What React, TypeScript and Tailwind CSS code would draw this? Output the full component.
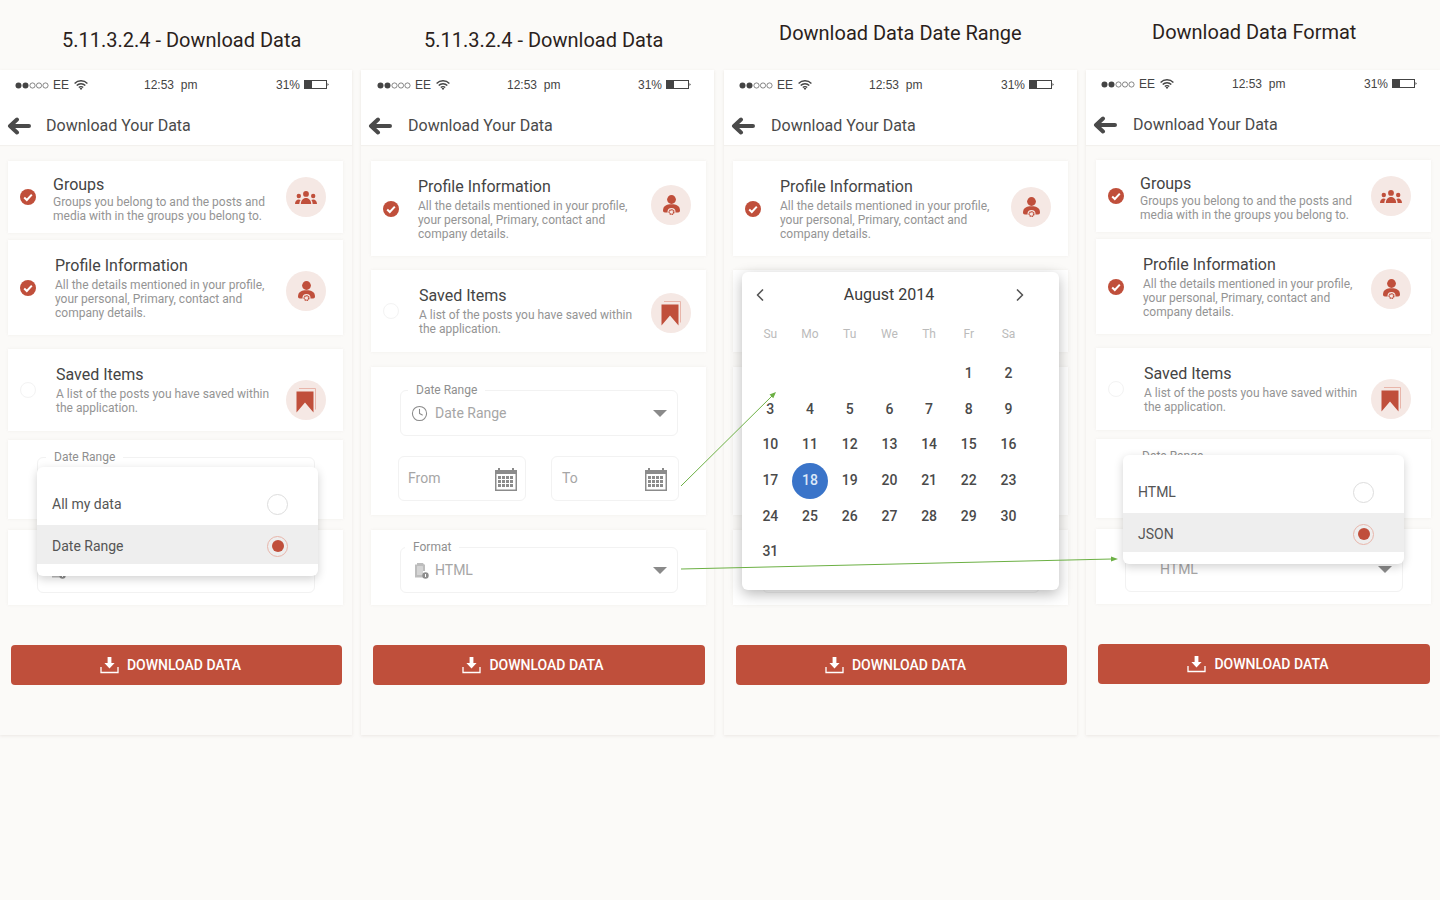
import React from "react";
import { ChevronLeft, ChevronRight, Clock } from "lucide-react";

const Check = () => (
  <svg width="16" height="16" viewBox="0 0 16 16" className="shrink-0">
    <circle cx="8" cy="8" r="8" fill="#c04f3b" />
    <path d="M4.200 8.500l2.600 2.500 5-5.400" fill="none" stroke="#fff" strokeWidth="2" />
  </svg>
);
const Empty = () => <div className="w-[16px] h-[16px] shrink-0 rounded-full border border-[#f3f3f3]" />;

const GroupsIcon = () => (
  <svg width="22" height="13" viewBox="0 0 22 13" fill="#c04f3b">
    <circle cx="11" cy="2.900" r="2.900" />
    <circle cx="3.800" cy="5" r="2.200" />
    <circle cx="18.200" cy="5" r="2.200" />
    <path d="M5.800 13c.2-3.600 2.200-6 5.200-6s5 2.400 5.200 6z" />
    <path d="M0 13c.1-2.800 1.600-4.400 3.800-4.400.8 0 1.300.2 1.800.5-.8 1.100-1.200 2.400-1.300 3.900z" />
    <path d="M22 13c-.1-2.800-1.600-4.400-3.800-4.400-.8 0-1.300.2-1.800.5.8 1.100 1.200 2.400 1.300 3.900z" />
  </svg>
);
const ProfileIcon = () => (
  <svg width="17" height="21" viewBox="0 0 17 21" fill="#c04f3b">
    <circle cx="8.500" cy="4.500" r="4.400" />
    <path d="M0 15.500C0 11 3.500 9.300 8.500 9.300s8.500 1.700 8.500 6.200c0 1.200-.8 2-1.800 2H1.800c-1 0-1.800-.8-1.800-2z" />
    <circle cx="8.500" cy="17" r="4" fill="#f5e8e4" />
    <circle cx="8.500" cy="17" r="2.300" fill="none" stroke="#c04f3b" strokeWidth="1.500" strokeDasharray="1.400 .5" />
  </svg>
);
const BookmarkIcon = () => (
  <svg width="20" height="25" viewBox="0 0 20 25" className="-ml-[1px]">
    <path d="M3 .5h16.500v21" fill="none" stroke="#e8b5aa" strokeWidth="1" />
    <path d="M.5 3.500h17v21l-8.500-10-8.500 10z" fill="#c04f3b" />
  </svg>
);
const Download = () => (
  <svg width="19" height="18" viewBox="0 0 19 18" fill="none">
    <path d="M1 11v5.500h17V11" stroke="#fff" strokeWidth="1.300" />
    <path d="M7.600 1h3.800v6h3.200l-5.100 5.600L4.400 7h3.200z" fill="#fff" />
  </svg>
);
const Back = () => (
  <svg width="24" height="18" viewBox="0 0 24 18" fill="none" stroke="#4a4a4a" strokeWidth="4" strokeLinecap="round" strokeLinejoin="round" className="shrink-0">
    <path d="M22 9H3.500M10 2.500L3 9l7 6.500" />
  </svg>
);
const Wifi = () => (
  <svg width="14" height="10" viewBox="0 0 14 10" fill="none" stroke="#444" strokeWidth="1.400">
    <path d="M.6 3.400a9 9 0 0 1 12.800 0M2.700 5.500a6 6 0 0 1 8.600 0M4.800 7.500a3.100 3.100 0 0 1 4.400 0" />
    <path d="M7 10L5.600 8.500a2 2 0 0 1 2.800 0z" fill="#444" stroke="none" />
  </svg>
);
const Battery = () => (
  <svg width="25" height="9" viewBox="0 0 25 9" className="-mt-[1px]">
    <rect x=".5" y=".5" width="22" height="8" fill="#fff" stroke="#444" />
    <rect x="1" y="1" width="7" height="7" fill="#444" />
    <path d="M23.500 3l1.300 1.500-1.300 1.500z" fill="#444" />
  </svg>
);
const Dots = () => (
  <svg width="34" height="7" viewBox="0 0 34 7">
    <circle cx="3.500" cy="3.500" r="3" fill="#444" />
    <circle cx="10.500" cy="3.500" r="3" fill="#444" />
    {[17.500, 24, 30.500].map((x) => (
      <circle key={x} cx={x} cy="3.500" r="2.600" fill="none" stroke="#555" strokeWidth=".7" />
    ))}
  </svg>
);
const Cal = () => (
  <svg width="22" height="24" viewBox="0 0 22 24">
    <path d="M0 3h3V1h2v2h12V1h2v2h3v21H0z" fill="#8b8b8b" />
    <rect x="1.500" y="7" width="19" height="15.500" fill="#fff" />
    {[9, 13, 17].map((y) =>
      [3, 7, 11, 15].map((x) => <rect key={`${x}${y}`} x={x} y={y} width="3" height="3" fill="#8b8b8b" />)
    )}
  </svg>
);
const FileIc = () => (
  <svg width="15" height="17" viewBox="0 0 15 17">
    <path d="M1 2.500h2V1h6l1 1.500h1V9H9v6.500H1z" fill="#bdbdbd" />
    <rect x="3" y="4" width="6" height="9" rx=".5" fill="#d5d5d5" />
    <circle cx="11.500" cy="13.500" r="3.200" fill="#8e8e8e" />
    <rect x="11" y="12" width="1" height="3" fill="#fff" />
  </svg>
);
const Caret = () => <div className="w-0 h-0 border-x-[7px] border-x-transparent border-t-[7px] border-t-[#8a8a8a]" />;

function Option({ lines, title, check, wrap, text, icon, circle, descCls = "mt-[2px]", bare = false }: { lines: string[]; title: string; check: boolean; wrap: string; text: string; icon: React.ReactNode; circle: string; descCls?: string; bare?: boolean }) {
  return (
    <div className={`flex items-center pl-3 bg-white shadow-[0_0_3px_rgba(120,100,90,0.08)] w-[335px] ${wrap}`}>
      {bare ? null : check ? <Check /> : <Empty />}
      {!bare && (
        <div className={text}>
          <div className="text-[16px] leading-[20px] text-[#444444]">{title}</div>
          <div className={`text-[12px] leading-[14px] text-[#949494] ${descCls}`}>
            {lines.map((l) => (
              <div key={l} className="whitespace-nowrap">{l}</div>
            ))}
          </div>
        </div>
      )}
      {!bare && <div className={`w-10 h-10 shrink-0 rounded-full bg-[#f5e8e4] flex items-center justify-center ml-auto ${circle}`}>{icon}</div>}
    </div>
  );
}

const GROUPS = ["Groups you belong to and the posts and", "media with in the groups you belong to."];
const PROFILE = ["All the details mentioned in your profile,", "your personal, Primary, contact and", "company details."];
const SAVED = ["A list of the posts you have saved within", "the application."];

function Field({ label, children, labelCls = "left-[7px]" }: { label?: string; children?: React.ReactNode; labelCls?: string }) {
  return (
    <div className="relative w-[278px] h-[46px] border border-[#f2f2f2] rounded-md flex items-center pl-[10px] pr-[10px]">
      {label && <span className={`absolute -top-[8px] bg-white px-2 text-[12px] leading-[14px] text-[#8f8f8f] ${labelCls}`}>{label}</span>}
      {children}
    </div>
  );
}

function DateCard({ mt, open, covered }: { mt: string; open: boolean; covered?: "all" | "value" }) {
  return (
    <div className={`bg-white shadow-[0_0_3px_rgba(120,100,90,0.08)] w-[335px] pl-[29px] ${mt} ${open ? "h-[148px] pt-[23px]" : "h-[79px] pt-[17px]"}`}>
      {covered === "all" ? (
        <Field />
      ) : covered === "value" ? (
        <Field label="Date Range" labelCls="left-[8px]" />
      ) : (
        <Field label="Date Range">
          <Clock size={17} strokeWidth={1.500} className="text-[#8a8a8a] shrink-0" />
          <span className="ml-[7px] text-[14px] text-[#a6a6a6]">Date Range</span>
          <span className="ml-auto"><Caret /></span>
        </Field>
      )}
      {open && (
        <div className="flex mt-[20px] -ml-[2px] gap-[25px]">
          <div className="w-[128px] h-[45px] border border-[#f2f2f2] rounded-md flex items-center justify-between pl-[9px] pr-[8px]">
            {covered !== "all" && <span className="text-[14px] text-[#a6a6a6]">From</span>}
            {covered !== "all" && <Cal />}
          </div>
          <div className="w-[128px] h-[45px] border border-[#f2f2f2] rounded-md flex items-center justify-between pl-[10px] pr-[11px]">
            {covered !== "all" && <span className="text-[14px] text-[#a6a6a6]">To</span>}
            {covered !== "all" && <Cal />}
          </div>
        </div>
      )}
    </div>
  );
}

function FormatCard({ mt, mode = "full" }: { mt: string; mode?: "full" | "none" | "iconOnly" | "valueOnly" }) {
  return (
    <div className={`h-[75px] pt-[17px] pl-[29px] w-[335px] bg-white shadow-[0_0_3px_rgba(120,100,90,0.08)] ${mt}`}>
      {mode === "none" ? (
        <Field />
      ) : (
        <Field label={mode === "full" ? "Format" : undefined} labelCls="left-[4px]">
          {mode !== "valueOnly" && <span className="ml-[3px] shrink-0"><FileIc /></span>}
          {mode === "valueOnly" && <span className="w-[15px] ml-[3px] shrink-0" />}
          {mode !== "iconOnly" && <span className="ml-[6px] text-[14px] text-[#a6a6a6]">HTML</span>}
          {mode !== "iconOnly" && <span className="ml-auto"><Caret /></span>}
        </Field>
      )}
    </div>
  );
}

function Menu({ a, b, top }: { a: string; b: string; top: string }) {
  return (
    <div className={`absolute left-[37px] w-[281px] pt-[18px] pb-3 bg-white rounded-md shadow-[0_3px_10px_rgba(0,0,0,0.18)] ${top}`}>
      <div className="h-[40px] pb-[1px] flex items-center justify-between pl-[15px] pr-[30px]">
        <span className="text-[14px] text-[#555555]">{a}</span>
        <div className="w-[21px] h-[21px] rounded-full border border-[#dddddd]" />
      </div>
      <div className="h-[39px] pt-[3px] flex items-center justify-between pl-[15px] pr-[30px] bg-[#eeeeee]">
        <span className="text-[14px] text-[#555555]">{b}</span>
        <div className="w-[21px] h-[21px] rounded-full border border-[#e8b5aa] flex items-center justify-center">
          <div className="w-[12px] h-[12px] rounded-full bg-[#c04f3b]" />
        </div>
      </div>
    </div>
  );
}

const WEEK = ["Su", "Mo", "Tu", "We", "Th", "Fr", "Sa"];
const DAYS: (number | null)[] = [null, null, null, null, null, 1, 2, ...Array.from({ length: 29 }, (_, i) => i + 3)];

function Calendar() {
  return (
    <div className="absolute left-[18px] top-[202px] w-[317px] h-[318px] bg-white rounded-md shadow-[0_4px_14px_rgba(0,0,0,0.28)] pl-[8.5px] text-[#444444]">
      <div className="flex items-center h-[46px] -ml-[8.5px]">
        <ChevronLeft size={20} strokeWidth={2} className="ml-[8px] text-[#555555]" />
        <span className="ml-[71px] w-[96px] text-center text-[16px] text-[#3a3a3a]">August 2014</span>
        <ChevronRight size={20} strokeWidth={2} className="ml-[73px] text-[#555555]" />
      </div>
      <div className="grid grid-cols-[repeat(7,39.7px)] h-[32px] items-center">
        {WEEK.map((d) => (
          <div key={d} className="text-center text-[12px] text-[#bbbbbb]">{d}</div>
        ))}
      </div>
      <div className="mt-[6px] grid grid-cols-[repeat(7,39.7px)] auto-rows-[35.6px] items-center justify-items-center">
        {DAYS.map((d, i) =>
          d === 18 ? (
            <div key={i} className="w-9 h-9 rounded-full bg-[#3a74c9] text-[#dbe7f8] text-[14px] font-medium flex items-center justify-center">18</div>
          ) : (
            <div key={i} className="text-[14px] font-medium text-[#4a4a4a]">{d}</div>
          )
        )}
      </div>
    </div>
  );
}

function Phone({ title, titleCls, wrap, statusCls, timeCls, shifted, cardMl, btnCls, titleX, children, overlay }: { title: string; titleCls: string; wrap: string; statusCls: string; timeCls: string; shifted: boolean; cardMl: string; btnCls: string; titleX: string; children: React.ReactNode; overlay?: React.ReactNode }) {
  return (
    <div className={wrap}>
      <div className={`h-[70px] text-[20px] leading-[24px] text-[#2b1f1c] whitespace-nowrap ${titleCls}`}>{title}</div>
      <div className="relative h-[665px] bg-[#fbfaf8] shadow-[0_1px_3px_rgba(120,100,90,0.12)]">
        <div className="h-[75px] bg-white shadow-[0_1px_1px_rgba(120,100,90,0.06)]">
          <div className={`flex items-center font-[Liberation_Sans,sans-serif] text-[12px] text-[#444444] ${shifted ? "h-[28px]" : "h-[30px]"} ${statusCls}`}>
            <Dots />
            <span className="ml-1">EE</span>
            <span className="ml-[5px]"><Wifi /></span>
            <span className={`whitespace-pre ${timeCls}`}>12:53  pm</span>
            <span className="ml-auto">31%</span>
            <span className="ml-1 mr-[23px]"><Battery /></span>
          </div>
          <div className={`flex items-center pl-[7px] pt-[7px] ${shifted ? "h-[47px]" : "h-[45px]"}`}>
            <Back />
            <span className={`text-[16px] text-[#4a4a4a] ${titleX}`}>Download Your Data</span>
          </div>
        </div>
        <div className={cardMl}>{children}</div>
        <div className={`h-10 mt-10 pr-[12px] bg-[#bf4f3b] rounded flex items-center justify-center gap-[8px] text-white text-[14px] font-medium ${btnCls}`}>
          <Download />
          <span>DOWNLOAD DATA</span>
        </div>
        {overlay}
      </div>
    </div>
  );
}

const g = <GroupsIcon />;
const p = <ProfileIcon />;
const b = <BookmarkIcon />;

export default function App() {
  return (
    <div className="relative w-[1440px] h-[900px] overflow-hidden bg-[#fbfaf8] font-[Roboto,sans-serif]">
      <div className="flex">
        <Phone title="5.11.3.2.4 - Download Data" titleCls="pl-[62px] pt-[28px]" wrap="w-[352px]" statusCls="pl-[15px]" timeCls="ml-[56px]" shifted={false} cardMl="ml-[8px]" btnCls="ml-[11px] w-[331px]" titleX="ml-[15px]"
          overlay={<Menu a="All my data" b="Date Range" top="top-[397px]" />}>
          <Option title="Groups" lines={GROUPS} check wrap="mt-[16px] h-[72px]" text="ml-[17px] mt-[3px]" descCls="mt-0" icon={g} circle="mr-[17px]" />
          <Option title="Profile Information" lines={PROFILE} check wrap="mt-[7px] h-[95px]" text="ml-[19px]" icon={p} circle="mr-[17px] mt-[7px]" />
          <Option title="Saved Items" lines={SAVED} check={false} wrap="mt-[14px] h-[82px]" text="ml-[20px]" icon={b} circle="mr-[17px] mt-[20px]" />
          <DateCard mt="mt-[9px]" open={false} covered="value" />
          <FormatCard mt="mt-[11px]" mode="iconOnly" />
        </Phone>
        <Phone title="5.11.3.2.4 - Download Data" titleCls="pl-[63px] pt-[28px]" wrap="ml-[9px] w-[353px]" statusCls="pl-[16px]" timeCls="ml-[57px]" shifted={false} cardMl="ml-[10px]" btnCls="ml-[12px] w-[332px]" titleX="ml-[16px]">
          <Option title="Profile Information" lines={PROFILE} check wrap="mt-[16px] h-[95px] w-[334px]" text="ml-[19px]" icon={p} circle="mr-[15px] mb-[7px]" />
          <Option title="Saved Items" lines={SAVED} check={false} wrap="mt-[14px] h-[82px] w-[334px]" text="ml-[20px]" icon={b} circle="mr-[15px] mt-[4px]" />
          <DateCard mt="mt-[15px]" open />
          <FormatCard mt="mt-[15px]" />
        </Phone>
        <Phone title="Download Data Date Range" titleCls="pl-[55px] pt-[21px]" wrap="ml-[10px] w-[353px]" statusCls="pl-[15px]" timeCls="ml-[57px]" shifted={false} cardMl="ml-[9px]" btnCls="ml-[12px] w-[331px]" titleX="ml-[16px]" overlay={<Calendar />}>
          <Option title="Profile Information" lines={PROFILE} check wrap="mt-[16px] h-[95px]" text="ml-[19px]" icon={p} circle="mr-[17px] mb-[3px]" />
          <Option title="" lines={[]} check={false} bare wrap="mt-[14px] h-[82px]" text="" icon={null} circle="" />
          <DateCard mt="mt-[15px]" open covered="all" />
          <FormatCard mt="mt-[15px]" mode="none" />
        </Phone>
        <Phone title="Download Data Format" titleCls="pl-[66px] pt-[20px]" wrap="ml-[9px] w-[354px]" statusCls="pl-[15px]" timeCls="ml-[58px]" shifted cardMl="ml-[10px]" btnCls="ml-[12px] w-[332px]" titleX="ml-[16px]"
          overlay={<Menu a="HTML" b="JSON" top="top-[385px]" />}>
          <Option title="Groups" lines={GROUPS} check wrap="mt-[15px] h-[72px] w-[334px]" text="ml-[16px] mt-[3px]" descCls="mt-0" icon={g} circle="mr-[20px]" />
          <Option title="Profile Information" lines={PROFILE} check wrap="mt-[7px] h-[95px] w-[334px]" text="ml-[19px]" icon={p} circle="mr-[20px] mt-[5px]" />
          <Option title="Saved Items" lines={SAVED} check={false} wrap="mt-[14px] h-[82px] w-[334px]" text="ml-[20px]" icon={b} circle="mr-[20px] mt-[20px]" />
          <DateCard mt="mt-[9px]" open={false} covered="value" />
          <FormatCard mt="mt-[11px]" mode="valueOnly" />
        </Phone>
      </div>
      <svg className="absolute inset-0 pointer-events-none" width="1440" height="900">
        <path d="M681 486L773 395" stroke="#6cb044" strokeWidth="1" fill="none" />
        <path d="M776 392l-6.500 2.500 3.800 3.800z" fill="#6cb044" />
        <path d="M681 569L1112 559" stroke="#6cb044" strokeWidth="1" fill="none" />
        <path d="M1118 559l-7-2.500v5z" fill="#6cb044" />
      </svg>
    </div>
  );
}
